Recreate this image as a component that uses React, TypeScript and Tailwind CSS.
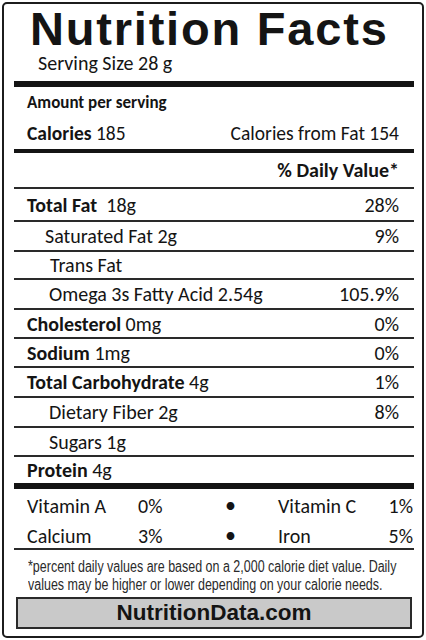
const body = "font-['Carlito','Lato',sans-serif]";

type Row = {
  label: string;
  amount?: string;
  dv?: string;
  bold?: boolean;
  indent?: string;
  h: string;
};

const rows: Row[] = [
  { label: "Total Fat", amount: "  18g", dv: "28%", bold: true, h: "h-[31px]" },
  { label: "Saturated Fat 2g", dv: "9%", indent: "pl-[31px]", h: "h-[28px]" },
  { label: "Trans Fat", indent: "pl-[36px]", h: "h-[26px]" },
  { label: "Omega 3s Fatty Acid 2.54g", dv: "105.9%", indent: "pl-[35px]", h: "h-[28px]" },
  { label: "Cholesterol", amount: " 0mg", dv: "0%", bold: true, h: "h-[27px]" },
  { label: "Sodium", amount: " 1mg", dv: "0%", bold: true, h: "h-[27px]" },
  { label: "Total Carbohydrate", amount: " 4g", dv: "1%", bold: true, h: "h-[28px]" },
  { label: "Dietary Fiber 2g", dv: "8%", indent: "pl-[35px]", h: "h-[28px]" },
  { label: "Sugars 1g", indent: "pl-[35px]", h: "h-[27px]" },
];

function Thin() {
  return <div className="h-[2px] bg-[#2a2a2a]" />;
}

export default function App() {
  return (
    <div className="w-[426px] h-[640px] bg-white p-[2px] text-[#141414]">
      <div className="h-[636px] border-2 border-[#1c1c1c] rounded-[5px] pl-[10px] pr-[8px] flex flex-col">
        <div className="h-[50px] pt-[2px] pl-[16px] font-['Liberation_Sans',Arial,sans-serif] font-bold text-[47px] leading-[46px] tracking-[1.8px] whitespace-nowrap">
          Nutrition Facts
        </div>
        <div className={`h-[27px] pl-[24px] ${body} text-[20px] leading-[19px]`}>
          Serving Size 28 g
        </div>
        <div className="h-[6px] bg-[#141414]" />

        <div className={`${body} pl-[13px] pr-[15px]`}>
          <div className="h-[31px] flex items-center font-bold text-[17px]">Amount per serving</div>
          <div className="h-[31px] flex items-center justify-between text-[19.5px]">
            <span>
              <span className="font-bold">Calories</span> 185
            </span>
            <span>Calories from Fat 154</span>
          </div>
        </div>
        <div className="h-[4px] bg-[#141414]" />

        <div className={`h-[34px] flex items-center justify-end pr-[15px] ${body} text-[20px] font-bold`}>
          % Daily Value*
        </div>
        <Thin />

        {rows.map((r) => (
          <div key={r.label}>
            <div
              className={`${r.h} flex items-center justify-between pr-[15px] ${r.indent ?? "pl-[13px]"} ${body} text-[20px]`}
            >
              <span className="whitespace-pre">
                <span className={r.bold ? "font-bold" : ""}>{r.label}</span>
                {r.amount ?? ""}
              </span>
              <span>{r.dv}</span>
            </div>
            <Thin />
          </div>
        ))}

        <div className={`h-[26px] flex items-center pl-[13px] ${body} text-[20px]`}>
          <span>
            <span className="font-bold">Protein</span> 4g
          </span>
        </div>
        <div className="h-[6px] bg-[#141414]" />

        <div className={`${body} text-[20px] leading-[24px] pl-[13px] pr-[1px]`}>
          <div className="h-[34px] grid grid-cols-[111px_87px_53px_1fr_auto] grid-rows-[34px] items-center">
            <span>Vitamin A</span>
            <span>0%</span>
            <span className="text-[22px] leading-none">•</span>
            <span>Vitamin C</span>
            <span>1%</span>
          </div>
          <div className="h-[25px] grid grid-cols-[111px_87px_53px_1fr_auto] grid-rows-[25px] items-center">
            <span>Calcium</span>
            <span>3%</span>
            <span className="text-[22px] leading-none">•</span>
            <span>Iron</span>
            <span>5%</span>
          </div>
        </div>
        <Thin />

        <div className="h-[47px] pt-[8px] pl-[14px] font-['Liberation_Sans',Arial,sans-serif] text-[16px] leading-[18px] text-[#2a2a2a] whitespace-nowrap">
          <div className="origin-left scale-x-[0.78]">
            *percent daily values are based on a 2,000 calorie diet value. Daily
            <br />
            values may be higher or lower depending on your calorie needs.
          </div>
        </div>

        <div className="mx-[2px] h-[32px] border-2 border-[#2a2a2a] bg-[#c9c9c9] flex items-center justify-center font-['Liberation_Sans',Arial,sans-serif] font-bold text-[22.5px] text-[#141414]">
          NutritionData.com
        </div>
      </div>
    </div>
  );
}
